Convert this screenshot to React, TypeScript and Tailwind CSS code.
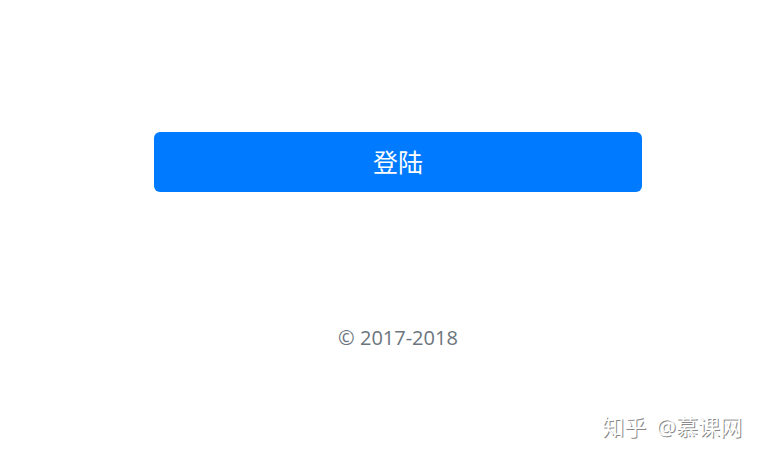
export default function App() {
  return (
    <div className="flex min-h-screen flex-col bg-white pb-4 font-['Open_Sans','Noto_Sans_CJK_SC',sans-serif]">
      <main className="pl-[154px] pr-[120px] pt-[132px] text-center">
        <form onSubmit={(e) => e.preventDefault()}>
          <button
            type="submit"
            className="w-full rounded-md bg-[#007bff] py-3.5 text-[25px] leading-8 text-white"
          >
            登陆
          </button>
        </form>
        <p className="mt-[130px] text-[20px] leading-8 text-[#6c757d]">© 2017-2018</p>
      </main>
      <footer className="mt-auto flex justify-end gap-2.5 pr-5 text-[22px] leading-8 text-white [text-shadow:1px_1px_0_#888]">
        <span>知乎</span>
        <span>@慕课网</span>
      </footer>
    </div>
  );
}
